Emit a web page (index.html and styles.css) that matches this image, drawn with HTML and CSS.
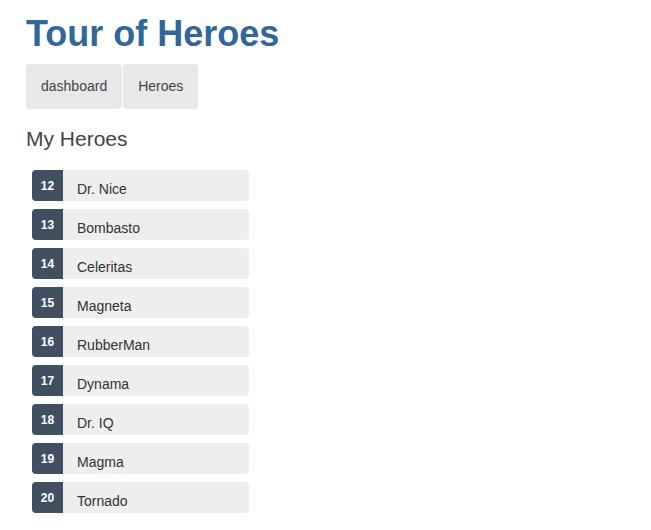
FILE: index.html
```html
<!DOCTYPE html>
<html>
<head>
<meta charset="utf-8">
<title>Tour of Heroes</title>
<link rel="stylesheet" href="styles.css">
</head>
<body>
<div class="app">
  <h1 class="title">Tour of Heroes</h1>
  <nav class="nav"><a class="nav-link" href="#">dashboard</a><a class="nav-link" href="#">Heroes</a></nav>
  <h2 class="subtitle">My Heroes</h2>
  <ul class="heroes">
    <li class="hero"><span class="badge">12</span><span class="name">Dr. Nice</span></li>
    <li class="hero"><span class="badge">13</span><span class="name">Bombasto</span></li>
    <li class="hero"><span class="badge">14</span><span class="name">Celeritas</span></li>
    <li class="hero"><span class="badge">15</span><span class="name">Magneta</span></li>
    <li class="hero"><span class="badge">16</span><span class="name">RubberMan</span></li>
    <li class="hero"><span class="badge">17</span><span class="name">Dynama</span></li>
    <li class="hero"><span class="badge">18</span><span class="name">Dr. IQ</span></li>
    <li class="hero"><span class="badge">19</span><span class="name">Magma</span></li>
    <li class="hero"><span class="badge">20</span><span class="name">Tornado</span></li>
  </ul>
</div>
</body>
</html>
```

FILE: styles.css
```css
html, body {
  margin: 0;
  padding: 0;
  background: #fff;
}
body {
  font-family: "Liberation Sans", Arial, sans-serif;
  font-size: 14px;
  color: #444;
}
.app {
  padding: 13px 0 0 26px;
}
.title {
  margin: 0;
  font-size: 36px;
  line-height: 41px;
  font-weight: bold;
  color: #336699;
}
.nav {
  display: flex;
  gap: 1px;
  margin-top: 10px;
}
.nav-link {
  display: block;
  padding: 14px 15px 15px;
  line-height: 16px;
  background: #e8e8e8;
  color: #444;
  text-decoration: none;
  border-radius: 4px;
}
.subtitle {
  margin: 18px 0 0;
  font-size: 21px;
  line-height: 24px;
  font-weight: normal;
  color: #444;
}
.heroes {
  list-style: none;
  margin: 19px 0 0 6px;
  padding: 0;
  width: 217px;
  display: flex;
  flex-direction: column;
  gap: 8px;
}
.hero {
  display: flex;
  height: 31px;
  background: #eee;
  border-radius: 4px;
}
.badge {
  width: 31px;
  box-sizing: border-box;
  padding-top: 9px;
  text-align: center;
  background: #405061;
  color: #fff;
  font-size: 12px;
  line-height: 14px;
  font-weight: bold;
  border-radius: 4px 0 0 4px;
}
.name {
  margin-left: 14px;
  padding-top: 11px;
  line-height: 16px;
  color: #333;
}
```
